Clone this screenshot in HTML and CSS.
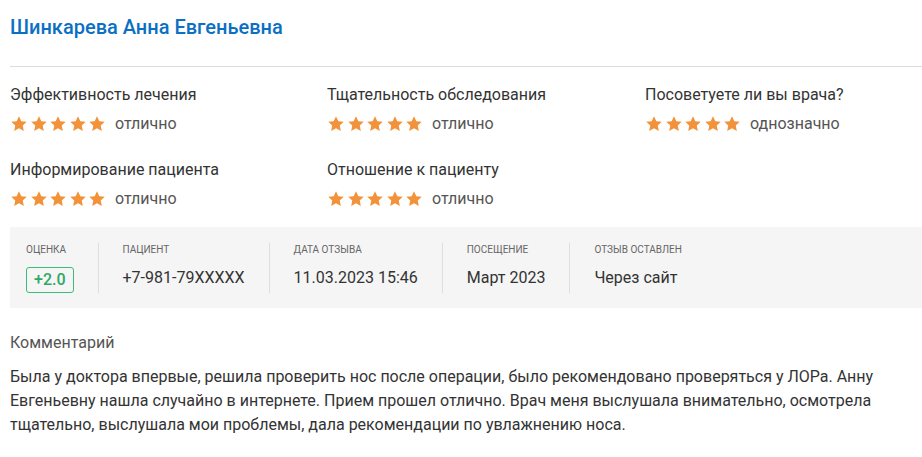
FILE: index.html
```html
<!DOCTYPE html>
<html lang="ru">
<head>
<meta charset="utf-8">
<title>Отзыв</title>
<link rel="stylesheet" href="styles.css">
</head>
<body>
<div class="review">
  <div class="review-head">
    <h2 class="doctor-name">Шинкарева Анна Евгеньевна</h2>
  </div>

  <div class="ratings">
    <div class="rating">
      <div class="rating-label">Эффективность лечения</div>
      <div class="rating-row">
        <span class="stars">
          <svg viewBox="0 0 24 24"><path d="M12 1.6l3.1 6.6 7.2.9-5.3 5 1.4 7.1L12 17.7l-6.4 3.5 1.4-7.1-5.3-5 7.2-.9z"/></svg>
          <svg viewBox="0 0 24 24"><path d="M12 1.6l3.1 6.6 7.2.9-5.3 5 1.4 7.1L12 17.7l-6.4 3.5 1.4-7.1-5.3-5 7.2-.9z"/></svg>
          <svg viewBox="0 0 24 24"><path d="M12 1.6l3.1 6.6 7.2.9-5.3 5 1.4 7.1L12 17.7l-6.4 3.5 1.4-7.1-5.3-5 7.2-.9z"/></svg>
          <svg viewBox="0 0 24 24"><path d="M12 1.6l3.1 6.6 7.2.9-5.3 5 1.4 7.1L12 17.7l-6.4 3.5 1.4-7.1-5.3-5 7.2-.9z"/></svg>
          <svg viewBox="0 0 24 24"><path d="M12 1.6l3.1 6.6 7.2.9-5.3 5 1.4 7.1L12 17.7l-6.4 3.5 1.4-7.1-5.3-5 7.2-.9z"/></svg>
        </span>
        <span class="rating-word">отлично</span>
      </div>
    </div>
    <div class="rating">
      <div class="rating-label">Тщательность обследования</div>
      <div class="rating-row">
        <span class="stars">
          <svg viewBox="0 0 24 24"><path d="M12 1.6l3.1 6.6 7.2.9-5.3 5 1.4 7.1L12 17.7l-6.4 3.5 1.4-7.1-5.3-5 7.2-.9z"/></svg>
          <svg viewBox="0 0 24 24"><path d="M12 1.6l3.1 6.6 7.2.9-5.3 5 1.4 7.1L12 17.7l-6.4 3.5 1.4-7.1-5.3-5 7.2-.9z"/></svg>
          <svg viewBox="0 0 24 24"><path d="M12 1.6l3.1 6.6 7.2.9-5.3 5 1.4 7.1L12 17.7l-6.4 3.5 1.4-7.1-5.3-5 7.2-.9z"/></svg>
          <svg viewBox="0 0 24 24"><path d="M12 1.6l3.1 6.6 7.2.9-5.3 5 1.4 7.1L12 17.7l-6.4 3.5 1.4-7.1-5.3-5 7.2-.9z"/></svg>
          <svg viewBox="0 0 24 24"><path d="M12 1.6l3.1 6.6 7.2.9-5.3 5 1.4 7.1L12 17.7l-6.4 3.5 1.4-7.1-5.3-5 7.2-.9z"/></svg>
        </span>
        <span class="rating-word">отлично</span>
      </div>
    </div>
    <div class="rating">
      <div class="rating-label">Посоветуете ли вы врача?</div>
      <div class="rating-row">
        <span class="stars">
          <svg viewBox="0 0 24 24"><path d="M12 1.6l3.1 6.6 7.2.9-5.3 5 1.4 7.1L12 17.7l-6.4 3.5 1.4-7.1-5.3-5 7.2-.9z"/></svg>
          <svg viewBox="0 0 24 24"><path d="M12 1.6l3.1 6.6 7.2.9-5.3 5 1.4 7.1L12 17.7l-6.4 3.5 1.4-7.1-5.3-5 7.2-.9z"/></svg>
          <svg viewBox="0 0 24 24"><path d="M12 1.6l3.1 6.6 7.2.9-5.3 5 1.4 7.1L12 17.7l-6.4 3.5 1.4-7.1-5.3-5 7.2-.9z"/></svg>
          <svg viewBox="0 0 24 24"><path d="M12 1.6l3.1 6.6 7.2.9-5.3 5 1.4 7.1L12 17.7l-6.4 3.5 1.4-7.1-5.3-5 7.2-.9z"/></svg>
          <svg viewBox="0 0 24 24"><path d="M12 1.6l3.1 6.6 7.2.9-5.3 5 1.4 7.1L12 17.7l-6.4 3.5 1.4-7.1-5.3-5 7.2-.9z"/></svg>
        </span>
        <span class="rating-word">однозначно</span>
      </div>
    </div>
    <div class="rating">
      <div class="rating-label">Информирование пациента</div>
      <div class="rating-row">
        <span class="stars">
          <svg viewBox="0 0 24 24"><path d="M12 1.6l3.1 6.6 7.2.9-5.3 5 1.4 7.1L12 17.7l-6.4 3.5 1.4-7.1-5.3-5 7.2-.9z"/></svg>
          <svg viewBox="0 0 24 24"><path d="M12 1.6l3.1 6.6 7.2.9-5.3 5 1.4 7.1L12 17.7l-6.4 3.5 1.4-7.1-5.3-5 7.2-.9z"/></svg>
          <svg viewBox="0 0 24 24"><path d="M12 1.6l3.1 6.6 7.2.9-5.3 5 1.4 7.1L12 17.7l-6.4 3.5 1.4-7.1-5.3-5 7.2-.9z"/></svg>
          <svg viewBox="0 0 24 24"><path d="M12 1.6l3.1 6.6 7.2.9-5.3 5 1.4 7.1L12 17.7l-6.4 3.5 1.4-7.1-5.3-5 7.2-.9z"/></svg>
          <svg viewBox="0 0 24 24"><path d="M12 1.6l3.1 6.6 7.2.9-5.3 5 1.4 7.1L12 17.7l-6.4 3.5 1.4-7.1-5.3-5 7.2-.9z"/></svg>
        </span>
        <span class="rating-word">отлично</span>
      </div>
    </div>
    <div class="rating">
      <div class="rating-label">Отношение к пациенту</div>
      <div class="rating-row">
        <span class="stars">
          <svg viewBox="0 0 24 24"><path d="M12 1.6l3.1 6.6 7.2.9-5.3 5 1.4 7.1L12 17.7l-6.4 3.5 1.4-7.1-5.3-5 7.2-.9z"/></svg>
          <svg viewBox="0 0 24 24"><path d="M12 1.6l3.1 6.6 7.2.9-5.3 5 1.4 7.1L12 17.7l-6.4 3.5 1.4-7.1-5.3-5 7.2-.9z"/></svg>
          <svg viewBox="0 0 24 24"><path d="M12 1.6l3.1 6.6 7.2.9-5.3 5 1.4 7.1L12 17.7l-6.4 3.5 1.4-7.1-5.3-5 7.2-.9z"/></svg>
          <svg viewBox="0 0 24 24"><path d="M12 1.6l3.1 6.6 7.2.9-5.3 5 1.4 7.1L12 17.7l-6.4 3.5 1.4-7.1-5.3-5 7.2-.9z"/></svg>
          <svg viewBox="0 0 24 24"><path d="M12 1.6l3.1 6.6 7.2.9-5.3 5 1.4 7.1L12 17.7l-6.4 3.5 1.4-7.1-5.3-5 7.2-.9z"/></svg>
        </span>
        <span class="rating-word">отлично</span>
      </div>
    </div>
  </div>

  <div class="meta">
    <div class="meta-item">
      <div class="meta-label">Оценка</div>
      <div class="score">+2.0</div>
    </div>
    <div class="meta-item">
      <div class="meta-label">Пациент</div>
      <div class="meta-value">+7-981-79XXXXX</div>
    </div>
    <div class="meta-item">
      <div class="meta-label">Дата отзыва</div>
      <div class="meta-value">11.03.2023 15:46</div>
    </div>
    <div class="meta-item">
      <div class="meta-label">Посещение</div>
      <div class="meta-value">Март 2023</div>
    </div>
    <div class="meta-item">
      <div class="meta-label">Отзыв оставлен</div>
      <div class="meta-value">Через сайт</div>
    </div>
  </div>

  <div class="comment">
    <div class="comment-title">Комментарий</div>
    <p class="comment-text">Была у доктора впервые, решила проверить нос после операции, было рекомендовано проверяться у ЛОРа. Анну Евгеньевну нашла случайно в интернете. Прием прошел отлично. Врач меня выслушала внимательно, осмотрела тщательно, выслушала мои проблемы, дала рекомендации по увлажнению носа.</p>
  </div>
</div>
</body>
</html>
```

FILE: styles.css
```css
* { box-sizing: border-box; }

html, body {
  margin: 0;
  padding: 0;
  background: #fff;
}

body {
  font-family: Roboto, "Noto Sans", Arial, sans-serif;
  color: #333;
  overflow: hidden;
}

.review {
  padding-left: 10px;
  width: 922px;
}

.review-head {
  padding: 14px 0 26px;
  border-bottom: 1px solid #dcdcdc;
}

.doctor-name {
  margin: 0;
  font-size: 20px;
  line-height: 26px;
  font-weight: 500;
  color: #0b6fc3;
}

.ratings {
  display: grid;
  grid-template-columns: 317px 318px 1fr;
  row-gap: 26px;
  padding-top: 18px;
}

.rating-label {
  font-size: 16px;
  line-height: 20px;
  color: #333;
}

.rating-row {
  display: flex;
  align-items: center;
  height: 20px;
  margin-top: 9px;
}

.stars {
  display: flex;
  gap: 1.5px;
}

.stars svg {
  width: 18px;
  height: 18px;
  fill: #f2923a;
  display: block;
}

.rating-word {
  margin-left: 9px;
  font-size: 16px;
  line-height: 20px;
  color: #555;
}

.meta {
  display: flex;
  margin-top: 18px;
  background: #f5f5f5;
  padding: 16px 0 15px;
}

.meta-item {
  height: 50px;
  padding: 0 24px;
  border-left: 1px solid #dedede;
}

.meta-item:first-child {
  padding-left: 16px;
  border-left: none;
}

.meta-label {
  font-size: 10px;
  line-height: 14px;
  text-transform: uppercase;
  color: #666;
  white-space: nowrap;
}

.meta-value {
  margin-top: 9px;
  font-size: 16px;
  line-height: 24px;
  color: #333;
  white-space: nowrap;
}

.score {
  display: inline-block;
  margin-top: 10px;
  height: 26px;
  padding: 0 7px;
  border: 1px solid #3dbb7a;
  border-radius: 3px;
  font-size: 16px;
  line-height: 24px;
  font-weight: 500;
  color: #2ea866;
}

.comment {
  padding-top: 25px;
}

.comment-title {
  font-size: 16px;
  line-height: 20px;
  color: #555;
}

.comment-text {
  margin: 12px 0 0;
  font-size: 16px;
  line-height: 23.8px;
  color: #333;
  max-width: 905px;
}
```
